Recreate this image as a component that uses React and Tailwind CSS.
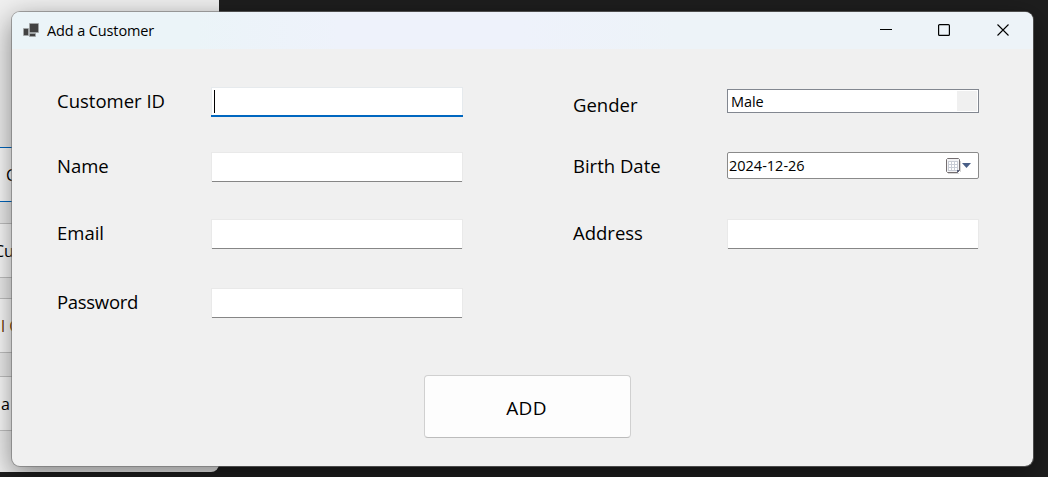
import React from "react";

function Label({ children, className = "" }) {
  return (
    <span className={`block h-7 w-[154px] shrink-0 whitespace-nowrap text-[18.5px] leading-7 text-black ${className}`}>
      {children}
    </span>
  );
}

function TextBox() {
  return (
    <div className="h-[30px] w-[252px] border border-b-0 border-[#e9e9e9] bg-white">
      <div className="h-[29px] w-full border-b border-[#868686]" />
    </div>
  );
}

function FocusedTextBox() {
  return (
    <div className="flex h-[30px] w-[252px] flex-col">
      <div className="h-[28px] border border-b-0 border-[#e6eaed] bg-white pl-[2px] pt-[2px]">
        <div className="h-[23px] w-px bg-black" />
      </div>
      <div className="h-[2px] bg-[#0067c0]" />
    </div>
  );
}

function CalendarIcon() {
  return (
    <svg className="mt-px" width="26" height="17" viewBox="0 0 26 17">
      <path d="M2 15.5h11M14.5 3v11" stroke="#d6d6d6" />
      <path d="M1.5 .5h11l1 1v11l-2 2h-10l-1-1v-12z" fill="#f3f3f5" stroke="#746e70" />
      <path d="M2 3h10v10H2z" fill="#c9cdd6" />
      <path d="M3 4h2v2H3zM6 4h2v2H6zM9 4h2v2H9zM3 7h2v2H3zM6 7h2v2H6zM9 7h2v2H9zM3 10h2v2H3zM6 10h2v2H6zM9 10h2v2H9z" fill="#fff" />
      <path d="M11 12h3l-3 3z" fill="#59617a" />
      <path d="M16 5h9l-4.5 5z" fill="#495f87" />
    </svg>
  );
}

function TitleBar() {
  return (
    <div className="flex h-[37px] items-center bg-[linear-gradient(to_right,#ebf4f8_18%,#eef2fb_32%,#eef2fb_50%,#edf3f8_65%)]">
      <svg className="ml-[11px] mt-px shrink-0" width="17" height="17" viewBox="0 0 17 17">
        <path d="M6.5 .5h9v9h-9zM.5 5.5h5v7h-5zM6.5 10.5h6v3h-6z" fill="#424242" stroke="#a5a7a9" strokeWidth=".7" />
      </svg>
      <span className="ml-[7px] whitespace-nowrap text-[14.5px] leading-5 tracking-[-0.12px] text-black">Add a Customer</span>
      <div className="ml-auto flex h-full items-center pr-[23px]">
        <svg className="-mt-px" width="130" height="14" viewBox="0 0 130 14" fill="none" stroke="#000">
          <path d="M0 6.5h12" />
          <rect x="58.6" y="1.6" width="10.8" height="10.8" rx="1" strokeWidth="1.2" />
          <path d="M117.5 1.5l11 11M128.5 1.5l-11 11" strokeWidth="1.1" />
        </svg>
      </div>
    </div>
  );
}

function MenuButton({ className = "", children }) {
  return (
    <div className={`h-[55px] shrink-0 border-y bg-[#fdfdfd] text-[16px] leading-[55px] whitespace-nowrap ${className}`}>{children}</div>
  );
}

export default function App() {
  return (
    <div className="relative h-[477px] w-[1048px] overflow-hidden bg-[#1e1e1e] font-['Open_Sans','Noto_Sans',sans-serif]">
      <div className="absolute left-0 top-0 flex h-[472px] w-[219px] flex-col overflow-hidden rounded-br-lg bg-[#f0f0f0] pt-[147px]">
        <MenuButton className="border-[#0067c0] pl-[6px]">C</MenuButton>
        <MenuButton className="mt-[21px] border-[#c4c4c4] -indent-[6px]">Cu</MenuButton>
        <MenuButton className="mt-[20px] border-[#c4c4c4] pl-px text-[#6b3400]">l C</MenuButton>
        <MenuButton className="mt-[23px] border-[#c4c4c4] pl-px">a</MenuButton>
      </div>
      <div className="absolute left-[11px] top-[11px] flex h-[456px] w-[1023px] flex-col overflow-hidden rounded-[9px] border border-[#6f6f6f]/60 bg-[#f0f0f0] bg-clip-padding shadow-[0_8px_28px_rgba(0,0,0,0.45)]">
        <TitleBar />
        <div className="flex pl-[45px]">
          <div className="flex w-[516px] flex-col pt-[38px]">
            <div className="flex h-[30px]"><Label>Customer ID</Label><FocusedTextBox /></div>
            <div className="mt-[35px] flex h-[30px]"><Label>Name</Label><TextBox /></div>
            <div className="mt-[37px] flex h-[30px]"><Label>Email</Label><TextBox /></div>
            <div className="mt-[39px] flex h-[30px]"><Label className="tracking-[-0.3px]">Password</Label><TextBox /></div>
          </div>
          <div className="flex flex-col pt-[40px]">
            <div className="flex h-[25px]">
              <Label className="mt-[2px]">Gender</Label>
              <div className="flex h-6 w-[252px] justify-between border border-[#828790] bg-white py-px pl-[3px] pr-px">
                <span className="text-[14.5px] leading-[22px] tracking-[-0.1px]">Male</span>
                <div className="w-5 bg-[#f0f0f0]" />
              </div>
            </div>
            <div className="mt-[38px] flex h-[27px]">
              <Label>Birth Date</Label>
              <div className="flex h-[27px] w-[252px] items-center justify-between rounded-[2px] border border-[#8a8a8a] bg-white pl-px pr-[6px]">
                <span className="text-[14.5px] leading-[25px]">2024-12-26</span>
                <CalendarIcon />
              </div>
            </div>
            <div className="mt-[40px] flex h-[30px]"><Label>Address</Label><TextBox /></div>
          </div>
        </div>
        <button className="ml-[412px] mt-[57px] h-[63px] w-[207px] shrink-0 rounded-[4px] border border-[#d0d0d0] border-b-[#bcbcbc] bg-[#fdfdfd] pr-[2px] pt-[4px] text-[19px] leading-none tracking-[0.3px] text-black">ADD</button>
      </div>
    </div>
  );
}
